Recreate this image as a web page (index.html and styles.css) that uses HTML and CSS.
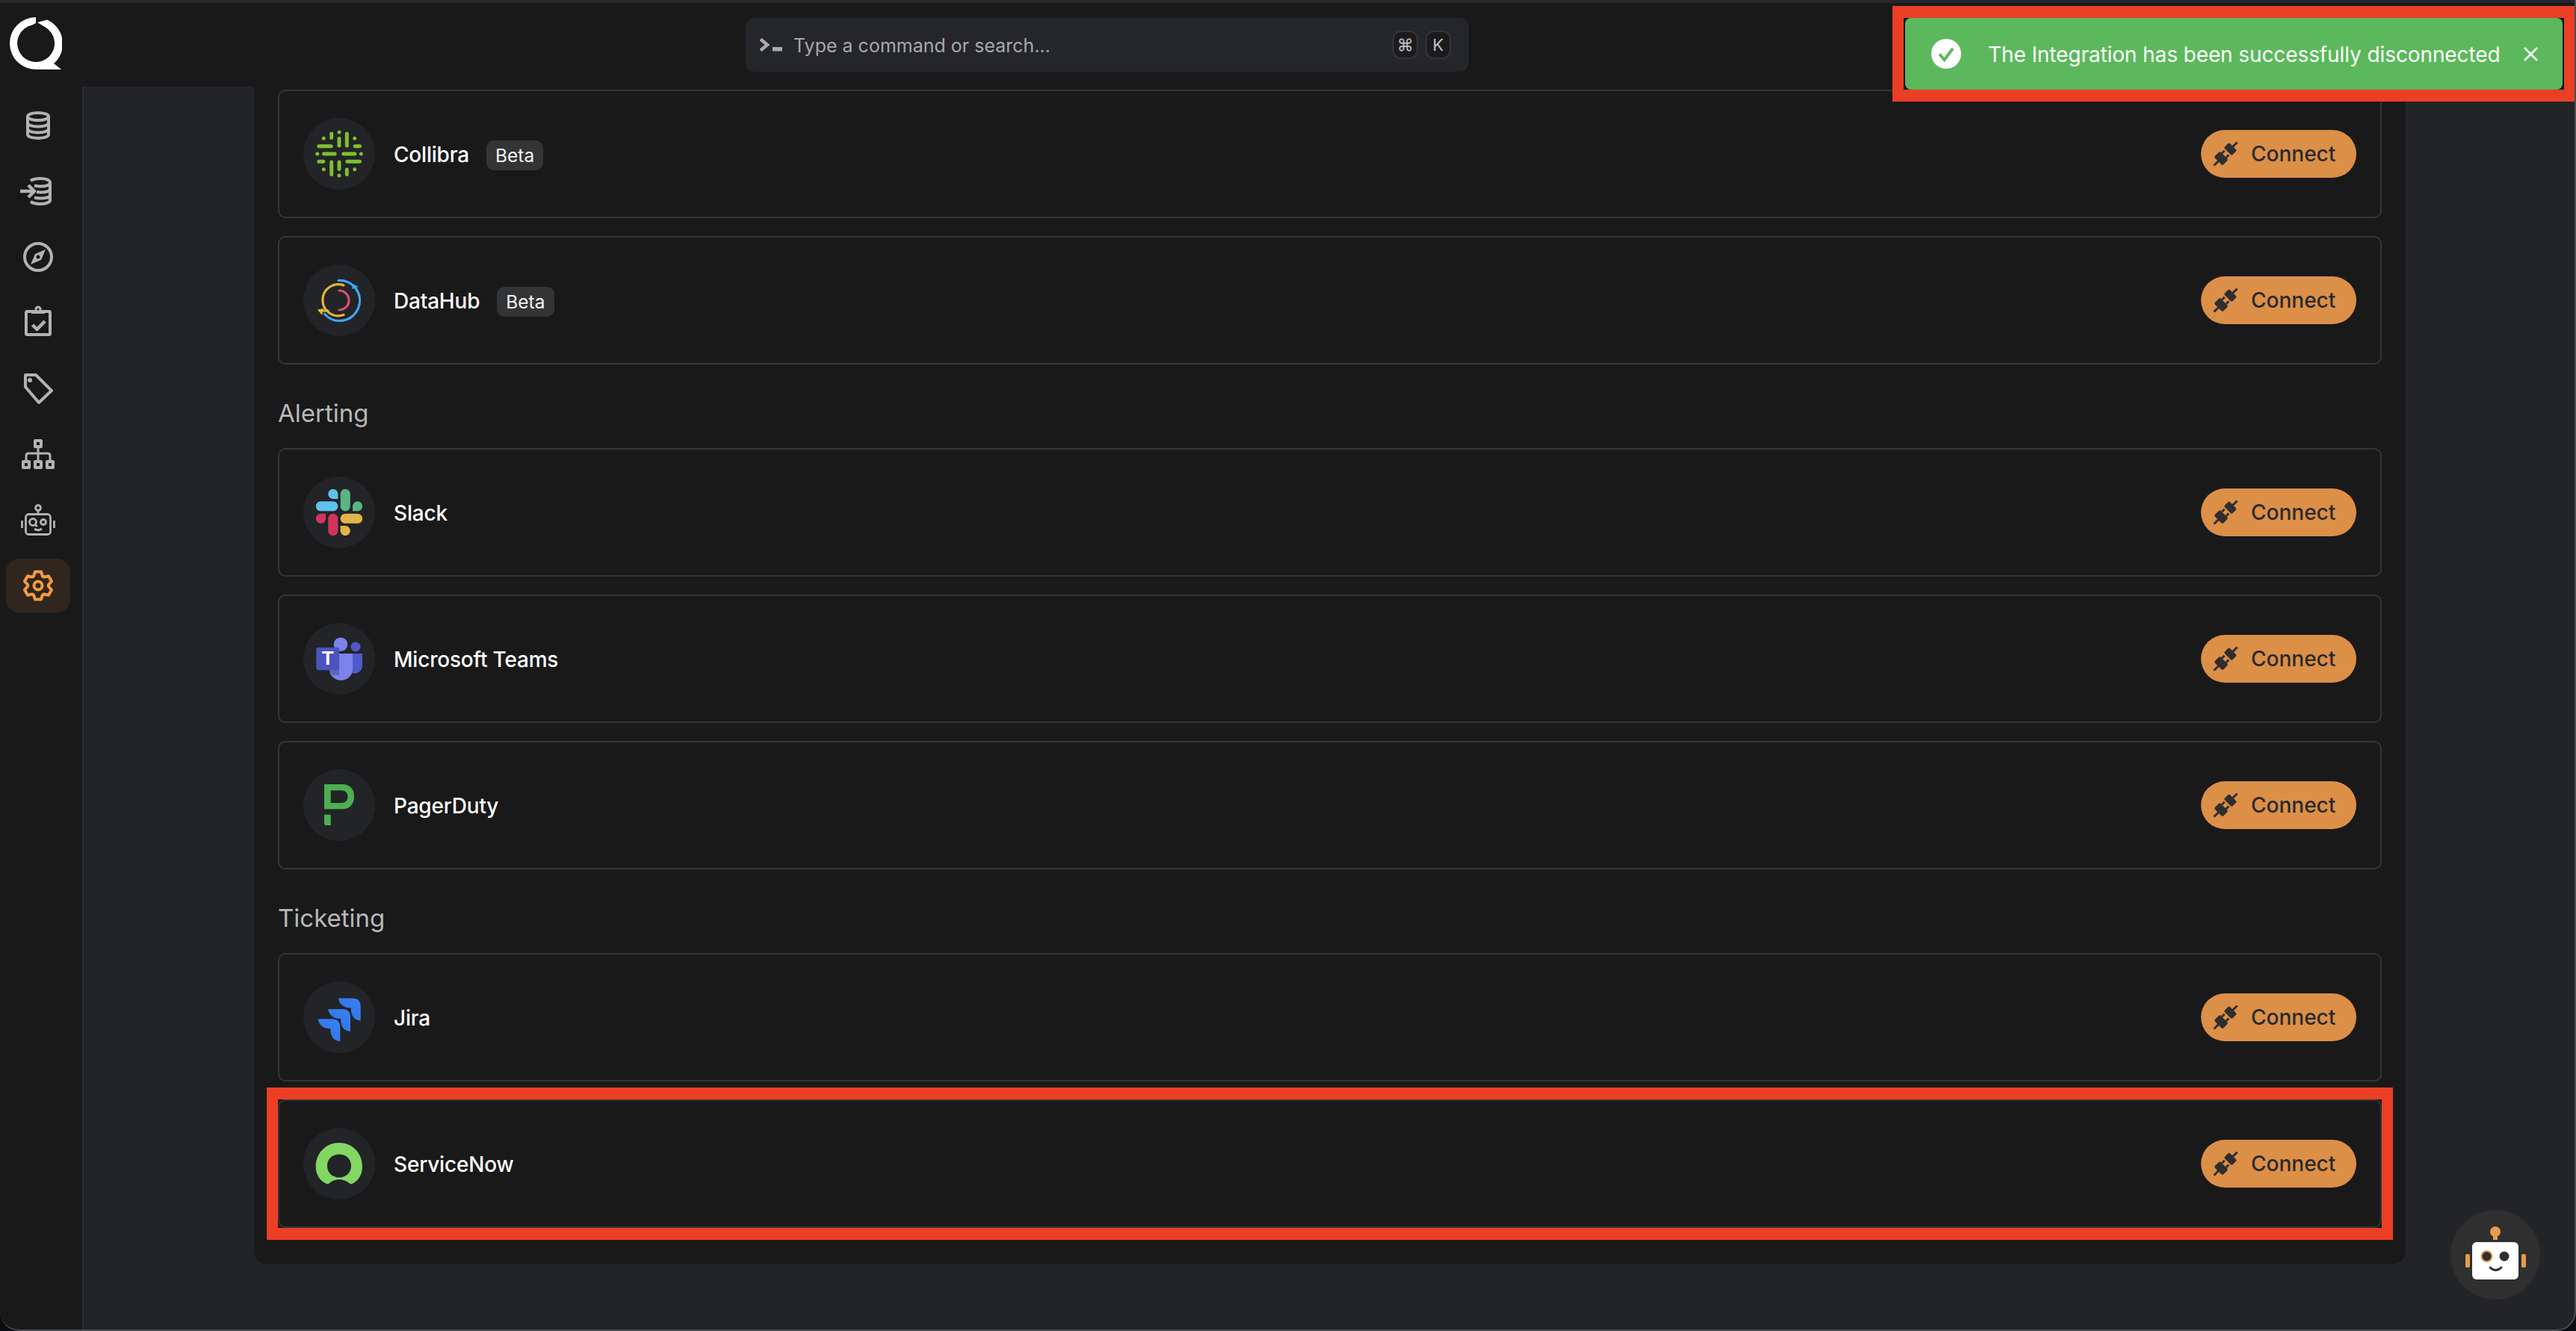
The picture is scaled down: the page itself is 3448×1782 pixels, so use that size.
FILE: index.html
```html
<!DOCTYPE html>
<html lang="en">
<head>
    <meta charset="UTF-8">
    <title>Integrations</title>
    <link rel="stylesheet" href="styles.css">
</head>
<body>
<div class="app">
    <header class="topbar">
        <svg class="logo" width="70" height="70" viewBox="0 0 70 70"><path fill="#fff" d="M35 0A35 35 0 0 0 35 70L69 70 59 62A35 35 0 0 0 50 3.500L37 7 47 13A25 25 0 1 1 30 10.500L35 8Z"/></svg>
        <div class="search">
            <svg class="prompt" width="30" height="18" viewBox="0 0 30 18"><path d="M1 1.500 10 9 1 16.500" fill="none" stroke="#aaa" stroke-width="4.500"/><rect x="17" y="12" width="13" height="5.500" fill="#aaa"/></svg>
            <span class="search-text">Type a command or search...</span>
            <span class="kbd">⌘</span>
            <span class="kbd">K</span>
        </div>
    </header>

    <div class="workspace">
        <nav class="sidebar">
            <a class="nav-item">
                <svg class="nav-icon" viewBox="0 0 48 48"><ellipse cx="24" cy="12" rx="14" ry="5"/><path d="M10 12V36C10 39 16 41 24 41S38 39 38 36V12M10 20.500C10 23.500 16 25.500 24 25.500S38 23.500 38 20.500M10 28.500C10 31.500 16 33.500 24 33.500S38 31.500 38 28.500"/></svg>
            </a>
            <a class="nav-item">
                <svg class="nav-icon" viewBox="0 0 48 48"><path d="M14 10C17 8 21 7 27 7 34 7 40 9 40 12.500 40 16 34 17.500 27 17.500 23 17.500 21 17 19 16.500M40 12.500V36C40 39 34 41 27 41 21 41 17 40 14 38M40 21C40 24 34 25.500 27 25.500L22 25M40 29C40 32 34 33.500 27 33.500 24 33.500 21 33 19 32.500"/><path d="M0 24H18M11 16 19 24 11 32" stroke-width="4.500"/></svg>
            </a>
            <a class="nav-item">
                <svg class="nav-icon" viewBox="0 0 48 48"><circle cx="24" cy="24" r="18"/><path class="solid" d="M34 14 28 28 14 34 20 20Z" stroke="none"/><circle cx="24" cy="24" r="2.500" fill="#19191a" stroke="none"/></svg>
            </a>
            <a class="nav-item">
                <svg class="nav-icon" viewBox="0 0 48 48"><rect x="8" y="9" width="32" height="31" rx="1.500"/><circle class="solid" cx="24" cy="6" r="4.500" stroke="none"/><rect class="solid" x="15" y="7" width="18" height="5" stroke="none"/><circle cx="24" cy="6" r="1.500" fill="#19191a" stroke="none"/><path d="M16.500 27 22.500 33 33 22" stroke-width="4.500"/></svg>
            </a>
            <a class="nav-item">
                <svg class="nav-icon" viewBox="0 0 48 48"><path d="M7 6H21L42 27 25 43 7 22Z"/><circle class="solid" cx="13" cy="13" r="3" stroke="none"/></svg>
            </a>
            <a class="nav-item">
                <svg class="nav-icon" viewBox="0 0 48 48"><rect x="20" y="6" width="8" height="8"/><rect x="4" y="34" width="8" height="8"/><rect x="20" y="34" width="8" height="8"/><rect x="36" y="34" width="8" height="8"/><path d="M24 16V32M8 32V26Q8 23 11 23H37Q40 23 40 26V32" stroke-width="3"/></svg>
            </a>
            <a class="nav-item">
                <svg class="nav-icon thin" viewBox="0 0 48 48"><rect x="7.500" y="16.500" width="33" height="27" rx="4"/><circle cx="24" cy="8" r="3.500"/><path d="M24 12V16M2.500 25V35M45.500 25V35" /><circle cx="17" cy="27" r="4.500"/><path d="M20 30.500 23 33"/><circle cx="31" cy="27" r="3.500"/><path d="M19 36Q24 39.500 29 36"/></svg>
            </a>
            <a class="nav-item active">
                <svg class="nav-icon" viewBox="-24 -24 48 48"><polygon points="-4,-18.500 4,-18.500 6,-12.500 7.830,-11.450 14.020,-12.710 18.020,-5.790 13.830,-1.050 13.830,1.050 18.020,5.790 14.020,12.710 7.830,11.450 6,12.500 4,18.500 -4,18.500 -6,12.500 -7.830,11.450 -14.020,12.710 -18.020,5.790 -13.830,1.050 -13.830,-1.050 -18.020,-5.790 -14.020,-12.710 -7.830,-11.450 -6,-12.500"/><circle r="5.500"/></svg>
            </a>
        </nav>

        <main class="main">
            <section class="panel">
                <div class="card">
                    <span class="logo-circle">
                        <svg width="96" height="96" viewBox="0 0 96 96" fill="none" stroke="#7fbf2e" stroke-width="5" stroke-linecap="round"><path d="M48 27.500V37M37.700 21V26.500M58.300 21V37M48 19V19M27.300 27.300V27.300M68.700 27.300V27.300M20.800 37.700H37.200M69.200 37.700H75.500M27.500 48H42.200M53.800 48H68.800M18.700 48V48M77.300 48V48M20.800 58.300H26.800M58.800 58.300H75.500M37.700 59V75.500M48 59V68.200M58.300 69V75.500M48 77V77M27.300 68.700V68.700M68.700 68.700V68.700"/></svg>
                    </span>
                    <span class="name">Collibra</span>
                    <span class="beta">Beta</span>
                    <button class="connect"><svg class="plug" width="32" height="32" viewBox="0 0 32 32"><use href="#plug"/></svg>Connect</button>
                </div>
                <div class="card">
                    <span class="logo-circle">
                        <svg width="96" height="96" viewBox="0 0 96 96" fill="none" stroke-width="3.200" stroke-linecap="round"><path stroke="#42a5f5" d="M47 21.500A27 27 0 1 1 28.500 66.500"/><path stroke="#e8b339" d="M54 28A21 21 0 1 0 54 67.500"/><path stroke="#d9506c" d="M48 35A13 13 0 0 1 48 61"/><path stroke="#e8b339" d="M33 62 22 62"/><path fill="#e8b339" stroke="none" d="M19 60.500 27 59 25 68Z"/><path fill="#42a5f5" stroke="none" d="M70 28 74 30 65 33 66 26Z"/></svg>
                    </span>
                    <span class="name">DataHub</span>
                    <span class="beta">Beta</span>
                    <button class="connect"><svg class="plug" width="32" height="32" viewBox="0 0 32 32"><use href="#plug"/></svg>Connect</button>
                </div>

                <h3 class="group-title">Alerting</h3>
                <div class="card">
                    <span class="logo-circle">
                        <svg class="nested" width="63" height="63" viewBox="0 0 127 127"><path fill="#d1355d" d="M27.200 80c0 7.300-5.900 13.200-13.200 13.200C6.700 93.200.8 87.300.8 80c0-7.300 5.900-13.200 13.200-13.200h13.200V80zm6.600 0c0-7.300 5.900-13.200 13.200-13.200 7.300 0 13.200 5.900 13.200 13.200v33c0 7.300-5.900 13.200-13.200 13.200-7.300 0-13.200-5.900-13.200-13.200V80z"/><path fill="#5fc2ec" d="M47 27c-7.300 0-13.200-5.900-13.200-13.200C33.800 6.500 39.700.6 47 .6c7.300 0 13.200 5.900 13.200 13.200V27H47zm0 6.700c7.300 0 13.200 5.900 13.200 13.200 0 7.300-5.900 13.200-13.200 13.200H13.900C6.600 60.100.7 54.200.7 46.900c0-7.300 5.900-13.200 13.200-13.200H47z"/><path fill="#5ab582" d="M99.900 46.900c0-7.300 5.900-13.200 13.200-13.200 7.300 0 13.200 5.900 13.200 13.200 0 7.300-5.900 13.200-13.200 13.200H99.900V46.900zm-6.600 0c0 7.300-5.900 13.200-13.200 13.200-7.300 0-13.200-5.900-13.200-13.200V13.800C66.900 6.500 72.800.6 80.100.6c7.300 0 13.200 5.900 13.200 13.200v33.100z"/><path fill="#e2b44b" d="M80.100 99.800c7.300 0 13.200 5.900 13.200 13.200 0 7.300-5.900 13.200-13.200 13.200-7.300 0-13.200-5.900-13.200-13.200V99.800h13.200zm0-6.600c-7.300 0-13.200-5.900-13.200-13.200 0-7.300 5.900-13.200 13.200-13.200h33.100c7.300 0 13.200 5.900 13.200 13.200 0 7.300-5.900 13.200-13.200 13.200H80.100z"/></svg>
                    </span>
                    <span class="name">Slack</span>
                    <button class="connect"><svg class="plug" width="32" height="32" viewBox="0 0 32 32"><use href="#plug"/></svg>Connect</button>
                </div>
                <div class="card">
                    <span class="logo-circle">
                        <svg width="96" height="96" viewBox="0 0 96 96"><circle cx="70" cy="32" r="6.500" fill="#5059c9"/><path fill="#5059c9" d="M60 41H79V58A10 10 0 0 1 60 62Z"/><circle cx="50" cy="28.700" r="9.300" fill="#7b83eb"/><path fill="#7b83eb" d="M35 41H66V62A15.500 15 0 0 1 35 62Z"/><path fill="#5d65c0" d="M35 41H48V70H40Q35 66 35 62Z"/><rect x="17.300" y="32.700" width="30.700" height="30.600" rx="3" fill="#4b53bc"/><text x="32.600" y="56" class="teams-t">T</text></svg>
                    </span>
                    <span class="name">Microsoft Teams</span>
                    <button class="connect"><svg class="plug" width="32" height="32" viewBox="0 0 32 32"><use href="#plug"/></svg>Connect</button>
                </div>
                <div class="card">
                    <span class="logo-circle">
                        <svg width="96" height="96" viewBox="0 0 96 96"><path fill="#4caf50" fill-rule="evenodd" d="M28 20H52C62 20 68 26 68 36 68 47 62 53.300 52 53.300H28ZM36.700 45H51C56 45 59.500 41.500 59.500 36.500 59.500 31.500 56 28.300 51 28.300H36.700Z"/><path fill="#4caf50" d="M28 60.700H36.700V75H31Q28 75 28 72Z"/></svg>
                    </span>
                    <span class="name">PagerDuty</span>
                    <button class="connect"><svg class="plug" width="32" height="32" viewBox="0 0 32 32"><use href="#plug"/></svg>Connect</button>
                </div>

                <h3 class="group-title">Ticketing</h3>
                <div class="card">
                    <span class="logo-circle">
                        <svg width="96" height="96" viewBox="0 0 96 96"><defs><linearGradient id="jiraFill" x1="1" y1="0" x2="0" y2="1"><stop offset="0" stop-color="#3b82f6"/><stop offset="1" stop-color="#2f6fe0"/></linearGradient><path id="jiraPiece" fill="url(#jiraFill)" d="M0 0H19Q30 0 30 11V30Q17 29 17 13 3 13 0 0Z"/></defs><use href="#jiraPiece" x="19.300" y="50.300"/><use href="#jiraPiece" x="33" y="37"/><use href="#jiraPiece" x="46.700" y="22.600"/></svg>
                    </span>
                    <span class="name">Jira</span>
                    <button class="connect"><svg class="plug" width="32" height="32" viewBox="0 0 32 32"><use href="#plug"/></svg>Connect</button>
                </div>
                <div class="card highlighted">
                    <span class="logo-circle">
                        <svg width="96" height="96" viewBox="0 0 96 96"><path fill="#82d763" fill-rule="evenodd" d="M33 75.500C22 72 16.700 62 16.700 52 16.700 33 31 20 48 20 65 20 79 33 79 52 79 62 74 72 63.500 75.500 58 71 53 69 48 69 43 69 38 71 33 75.500ZM48 35.500C38 35.500 32 42 32 51 32 60 39 66.500 48 66.500 57 66.500 64 60 64 51 64 42 58 35.500 48 35.500Z"/></svg>
                    </span>
                    <span class="name">ServiceNow</span>
                    <button class="connect"><svg class="plug" width="32" height="32" viewBox="0 0 32 32"><use href="#plug"/></svg>Connect</button>
                </div>
            </section>
        </main>
    </div>

    <div class="toast-mark">
        <div class="toast">
            <svg class="toast-check" width="40" height="40" viewBox="0 0 40 40"><circle cx="20" cy="20" r="20" fill="#fff"/><path d="M11 20.500 17.500 28 29 13" fill="none" stroke="#5cb85c" stroke-width="4"/></svg>
            <span class="toast-text">The Integration has been successfully disconnected</span>
            <svg class="toast-close" width="19" height="19" viewBox="0 0 19 19"><path d="M1 1 18 18M18 1 1 18" stroke="#fff" stroke-width="2.500"/></svg>
        </div>
    </div>

    <button class="bot">
        <svg width="120" height="120" viewBox="0 0 120 120"><circle cx="60" cy="29" r="7" fill="#e89a4e"/><rect x="57" y="34" width="6" height="6" fill="#e89a4e"/><rect x="20" y="59" width="6" height="18" rx="2" fill="#e89a4e"/><rect x="95" y="59" width="6" height="18" rx="2" fill="#e89a4e"/><rect x="29" y="43" width="62" height="50" rx="6" fill="#fff"/><circle cx="48.500" cy="62" r="7" fill="#2f2f2f" stroke="#e89a4e" stroke-width="2"/><circle cx="72" cy="62" r="6.500" fill="#2f2f2f"/><path d="M53 77Q60.500 84 68 77" fill="none" stroke="#2f2f2f" stroke-width="3" stroke-linecap="round"/></svg>
    </button>

    <svg class="sprites" width="0" height="0"><defs><g id="plug" transform="rotate(-45 16 16)"><path d="M-6 16H3M29 16H38" stroke="#2e2e2e" stroke-width="3"/><rect x="2" y="8" width="11" height="16" rx="2" fill="#2e2e2e"/><rect x="13" y="10.500" width="5" height="3" fill="#2e2e2e"/><rect x="13" y="18.500" width="5" height="3" fill="#2e2e2e"/><rect x="20" y="8.500" width="10" height="15" rx="2" fill="#2e2e2e"/></g></defs></svg>
</div>
</body>
</html>
```

FILE: styles.css
```css
* {
    box-sizing: border-box;
}
html, body {
    margin: 0;
    height: 100%;
    background: #0b0b12;
    overflow: hidden;
}
body {
    font-family: Inter, "Liberation Sans", sans-serif;
    font-size: 28px;
    color: #fff;
}
.app {
    position: relative;
    width: 3448px;
    height: 1782px;
    overflow: hidden;
    border-radius: 0 0 26px 26px;
    background: #232427;
}
.app::after {
    content: "";
    position: absolute;
    inset: 0;
    border: 0 solid #4c4d4f;
    border-width: 0 2px 2px 0;
    border-radius: 0 0 26px 26px;
    pointer-events: none;
}
.sprites {
    position: absolute;
}

/* top bar */
.topbar {
    display: flex;
    align-items: center;
    height: 116px;
    padding: 0 0 0 13px;
    background: #19191a;
    border-top: 4px solid #25282b;
}
.logo {
    flex: none;
    margin-top: -4px;
}
.search {
    display: flex;
    align-items: center;
    width: 968px;
    height: 72px;
    margin-left: 915px;
    padding: 0 24px 0 19px;
    background: #25262a;
    border-radius: 12px;
}
.prompt {
    flex: none;
    margin-right: 15px;
}
.search-text {
    flex: 1;
    padding-top: 2px;
    color: #a8a8a8;
    font-size: 25px;
}
.kbd {
    display: flex;
    align-items: center;
    justify-content: center;
    width: 34px;
    height: 38px;
    margin-left: 10px;
    background: #1b1b1d;
    border: 2px solid #333437;
    border-radius: 11px;
    color: #c4c4c4;
    font-size: 22px;
}

/* sidebar */
.workspace {
    display: flex;
    height: 1666px;
}
.sidebar {
    flex: none;
    display: flex;
    flex-direction: column;
    gap: 16px;
    width: 112px;
    padding: 16px 16px 0 8px;
    background: #19191a;
    border-right: 2px solid #2d2e30;
}
.nav-item {
    display: flex;
    align-items: center;
    justify-content: center;
    height: 72px;
    border-radius: 18px;
}
.nav-item.active {
    background: #30261e;
}
.nav-icon {
    width: 48px;
    height: 48px;
    fill: none;
    stroke: #b2b2b2;
    stroke-width: 4;
    stroke-linejoin: round;
}
.nav-icon.thin {
    stroke-width: 2.8;
}
.nav-icon .solid {
    fill: #b2b2b2;
}
.active .nav-icon {
    stroke: #f39c3d;
}

/* integrations list */
.main {
    flex: 1;
    padding-left: 228px;
}
.panel {
    display: flex;
    flex-direction: column;
    gap: 24px;
    width: 2880px;
    padding: 4px 32px 48px;
    background: #19191a;
    border-radius: 0 0 16px 16px;
}
.group-title {
    height: 48px;
    margin: 16px 0 0;
    color: #b8b8b8;
    font-size: 33px;
    font-weight: 400;
    line-height: 50px;
}
.card {
    position: relative;
    display: flex;
    align-items: center;
    height: 172px;
    padding: 0 32px;
    border: 2px solid #333436;
    border-radius: 10px;
}
.highlighted::before {
    content: "";
    position: absolute;
    inset: -18px -17px;
    border: solid #ea3f25;
    border-width: 16px 15px;
    pointer-events: none;
}
.logo-circle {
    flex: none;
    width: 96px;
    height: 96px;
    margin-right: 25px;
    background: #222427;
    border-radius: 50%;
}
.logo-circle svg {
    display: block;
}
.logo-circle .nested {
    transform: translate(16.5px, 16.5px);
}
.teams-t {
    fill: #fff;
    font-family: "Liberation Sans", sans-serif;
    font-size: 26px;
    font-weight: 700;
    text-anchor: middle;
}
.name {
    padding-top: 2px;
    font-weight: 500;
    letter-spacing: -0.2px;
}
.beta {
    display: flex;
    align-items: center;
    height: 40px;
    margin: 4px 0 0 23px;
    padding: 0 12px;
    background: #333436;
    border-radius: 10px;
    color: #f4f4f4;
    font-size: 24.500px;
}
.connect {
    display: flex;
    align-items: center;
    width: 208px;
    height: 64px;
    margin-left: auto;
    padding: 0 0 0 17px;
    background: #dc8f47;
    border: 0;
    border-radius: 32px;
    color: #2a2a2a;
    font-family: inherit;
    font-size: 28px;
    font-weight: 500;
}
.plug {
    flex: none;
    margin-right: 18px;
    overflow: visible;
}

/* toast with its red annotation */
.toast-mark {
    position: absolute;
    top: 8px;
    right: 0;
    width: 915px;
    height: 128px;
    padding: 0 2px;
    background-clip: padding-box;
    background-color: #19191a;
    border: solid #ea3f25;
    border-width: 16px 16px 16px 15px;
}
.toast {
    display: flex;
    align-items: center;
    height: 96px;
    padding: 0 33px 0 35px;
    background: #5cb85c;
    border-radius: 8px;
}
.toast-check {
    flex: none;
    margin-right: 36px;
}
.toast-text {
    flex: 1;
    padding-top: 2px;
    letter-spacing: -0.1px;
    white-space: nowrap;
}
.toast-close {
    flex: none;
}

/* assistant button */
.bot {
    position: absolute;
    right: 48px;
    bottom: 42px;
    width: 120px;
    height: 120px;
    padding: 0;
    background: #2f2f2f;
    border: 0;
    border-radius: 50%;
}
.bot svg {
    display: block;
}
```
